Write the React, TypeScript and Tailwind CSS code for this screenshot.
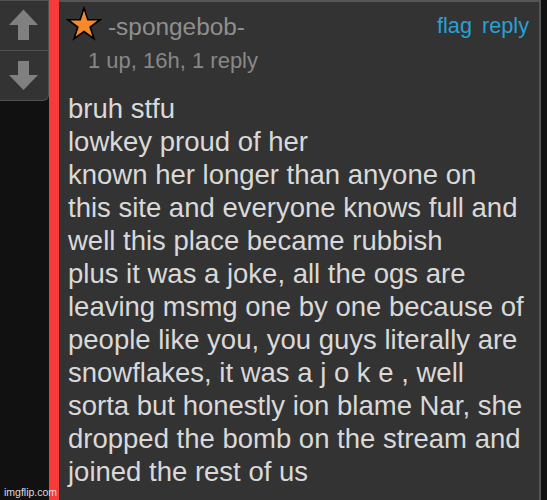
import React from "react";

const lines = [
  "bruh stfu",
  "lowkey proud of her",
  "known her longer than anyone on",
  "this site and everyone knows full and",
  "well this place became rubbish",
  "plus it was a joke, all the ogs are",
  "leaving msmg one by one because of",
  "people like you, you guys literally are",
  "snowflakes, it was a j o k e , well",
  "sorta but honestly ion blame Nar, she",
  "dropped the bomb on the stream and",
  "joined the rest of us",
];

export default function App() {
  return (
    <div
      className="relative flex w-[547px] h-[500px] bg-[#111111] overflow-hidden"
      style={{ fontFamily: '"Liberation Sans", Arial, sans-serif' }}
    >
      {/* vote column */}
      <div className="w-[49px] shrink-0">
        <div className="w-[49px] h-[101px] bg-[#333333] border-t border-r border-b border-[#505050] rounded-br-[6px] flex flex-col">
          <div className="h-[49px]">
            <svg width="48" height="49" viewBox="0 0 48 49">
              <polygon points="23.5,8.5 38,24 29,24 29,39 18,39 18,24 9,24" fill="#808080" />
            </svg>
          </div>
          <div className="h-px bg-[#505050]" />
          <div className="h-[49px]">
            <svg width="48" height="49" viewBox="0 0 48 49">
              <polygon points="18,10 29,10 29,24 38,24 23.5,39 9,24 18,24" fill="#808080" />
            </svg>
          </div>
        </div>
      </div>

      {/* red bar */}
      <div className="w-[10px] shrink-0 bg-[#f73b3b]" />

      {/* comment panel */}
      <div className="w-[482px] shrink-0 h-full bg-[#333333] border-t-2 border-r-2 border-[#555555]">
        <div className="flex items-start pl-[7px] pr-[10px]">
          <svg className="mt-[4px] shrink-0" width="36" height="36" viewBox="0 0 36 36">
            <polygon
              points="18,2 21.82,13.74 34.17,13.75 24.18,21.01 27.99,32.75 18,25.5 8.01,32.75 11.82,21.01 1.83,13.75 14.18,13.74"
              fill="#f6892c"
              stroke="#000000"
              strokeWidth="1.6"
              strokeLinejoin="miter"
            />
          </svg>
          <div className="ml-[6px] mt-[11px] text-[24.4px] leading-[28px] text-[#8f8f8f] whitespace-nowrap">
            -spongebob-
          </div>
          <div className="ml-auto mt-[11px] flex gap-[10px] text-[21.7px] leading-[26px] text-[#27a2d3]">
            <span>flag</span>
            <span>reply</span>
          </div>
        </div>
        <div className="mt-[6px] pl-[29px] text-[22px] leading-[26px] text-[#888888] whitespace-nowrap">
          1 up, 16h, 1 reply
        </div>
        <div className="mt-[18px] pl-[9px] text-[27.5px] leading-[33px] text-[#d9d9d9]">
          {lines.map((l, i) => (
            <div key={i} className="whitespace-nowrap">
              {l}
            </div>
          ))}
        </div>
      </div>

      <div className="absolute left-[4px] bottom-[2px] text-[10.5px] leading-[12px] text-[#dddddd]">
        imgflip.com
      </div>
    </div>
  );
}
